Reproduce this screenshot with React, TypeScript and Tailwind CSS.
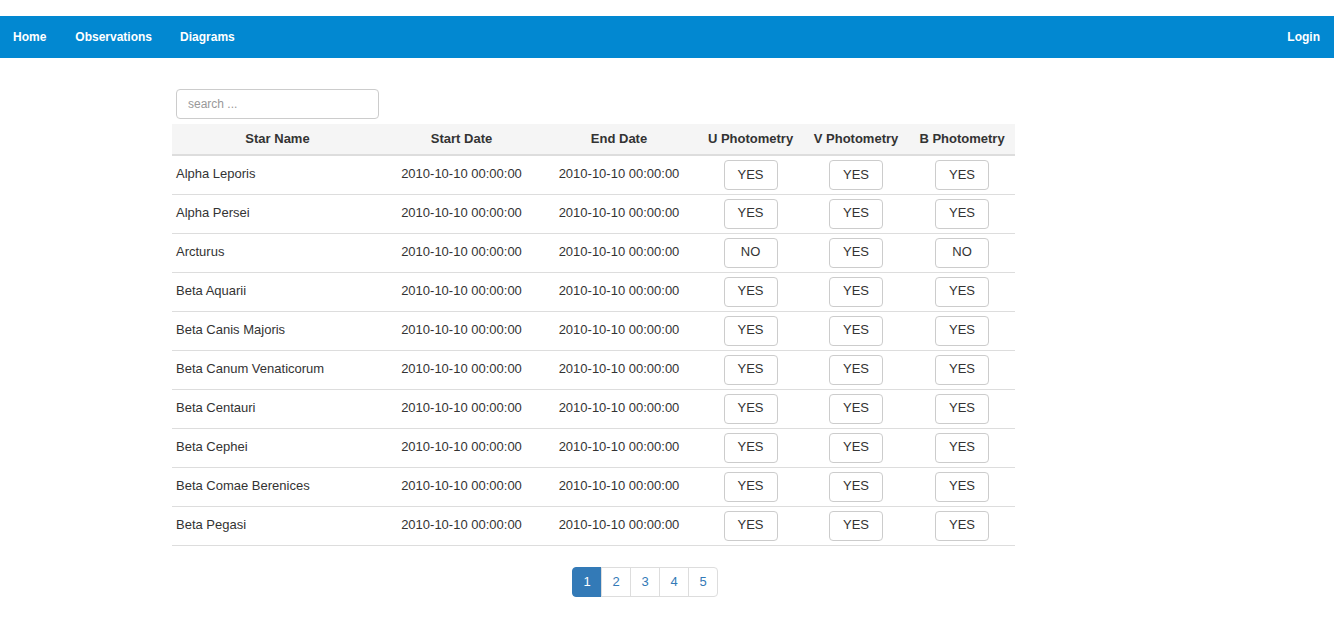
import React from "react";

const stars: [string, string, string, string][] = [
  ["Alpha Leporis", "YES", "YES", "YES"],
  ["Alpha Persei", "YES", "YES", "YES"],
  ["Arcturus", "NO", "YES", "NO"],
  ["Beta Aquarii", "YES", "YES", "YES"],
  ["Beta Canis Majoris", "YES", "YES", "YES"],
  ["Beta Canum Venaticorum", "YES", "YES", "YES"],
  ["Beta Centauri", "YES", "YES", "YES"],
  ["Beta Cephei", "YES", "YES", "YES"],
  ["Beta Comae Berenices", "YES", "YES", "YES"],
  ["Beta Pegasi", "YES", "YES", "YES"],
];

function Btn({ v }: { v: string }) {
  return (
    <div className="flex justify-center">
      <button className="w-[54px] h-[30px] border border-[#ccc] rounded-[4px] bg-white text-[13px] text-[#333] pb-px">
        {v}
      </button>
    </div>
  );
}

export default function App() {
  return (
    <div className="min-h-[642px] bg-white text-[#333] text-[13px]" style={{ fontFamily: '"Liberation Sans", Arial, sans-serif' }}>
      <div className="h-4" />
      <nav className="h-[42px] bg-[#0288d1] flex items-center justify-between text-white font-bold text-[12px]">
        <div className="flex ml-[13px]">
          <a className="mr-[29px]">Home</a>
          <a className="mr-[28px]">Observations</a>
          <a>Diagrams</a>
        </div>
        <a className="mr-[14px]">Login</a>
      </nav>
      <div className="w-[843px] ml-[172px] mt-[31px]">
        <div className="pl-1 mb-[5px]">
          <input
            placeholder="search ..."
            className="w-[203px] h-[30px] border border-[#ccc] rounded-[4px] px-[11px] text-[12px] placeholder:text-[#999] outline-none"
          />
        </div>
        <table className="w-full border-collapse">
          <colgroup>
            <col className="w-[211px]" />
            <col className="w-[157px]" />
            <col className="w-[158px]" />
            <col className="w-[105px]" />
            <col className="w-[106px]" />
            <col className="w-[106px]" />
          </colgroup>
          <thead>
            <tr className="bg-[#f5f5f5] h-[31px] border-b-2 border-[#ddd]">
              <th className="font-bold text-center">Star Name</th>
              <th className="font-bold text-center">Start Date</th>
              <th className="font-bold text-center">End Date</th>
              <th className="font-bold text-center">U Photometry</th>
              <th className="font-bold text-center">V Photometry</th>
              <th className="font-bold text-center">B Photometry</th>
            </tr>
          </thead>
          <tbody>
            {stars.map((s) => (
              <tr key={s[0]} className="h-[39px] border-b border-[#ddd]">
                <td className="pl-1 pb-[2px]">{s[0]}</td>
                <td className="text-center pb-[2px]">2010-10-10 00:00:00</td>
                <td className="text-center pb-[2px]">2010-10-10 00:00:00</td>
                <td><Btn v={s[1]} /></td>
                <td><Btn v={s[2]} /></td>
                <td><Btn v={s[3]} /></td>
              </tr>
            ))}
          </tbody>
        </table>
        <div className="flex mt-[21px] ml-[400px]">
          <div className="flex h-[30px] text-[13px]">
            {[1, 2, 3, 4, 5].map((n) => (
              <a
                key={n}
                className={
                  n === 1
                    ? "w-[30px] flex items-center justify-center bg-[#337ab7] text-white border border-[#337ab7] rounded-l-[4px]"
                    : "w-[30px] flex items-center justify-center text-[#337ab7] border border-[#ddd] -ml-px" + (n === 5 ? " rounded-r-[4px]" : "")
                }
              >
                {n}
              </a>
            ))}
          </div>
        </div>
      </div>
    </div>
  );
}
